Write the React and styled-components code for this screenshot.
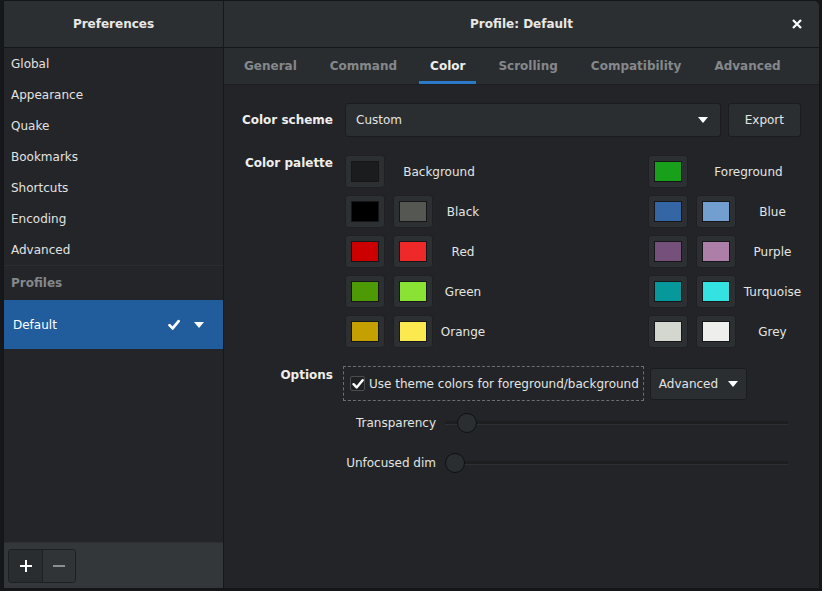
import React from "react";
import styled, { createGlobalStyle } from "styled-components";

const GlobalStyle = createGlobalStyle`
  html, body {
    margin: 0;
    padding: 0;
    background: #16171a;
  }
  * {
    box-sizing: border-box;
  }
`;

const menuItems = ["Global", "Appearance", "Quake", "Bookmarks", "Shortcuts", "Encoding", "Advanced"];
const tabs = ["General", "Command", "Color", "Scrolling", "Compatibility", "Advanced"];

const palette = [
  { left: ["#000000", "#555753"], leftName: "Black", right: ["#3465a4", "#729fcf"], rightName: "Blue" },
  { left: ["#cc0000", "#ef2929"], leftName: "Red", right: ["#75507b", "#ad7fa8"], rightName: "Purple" },
  { left: ["#4e9a06", "#8ae234"], leftName: "Green", right: ["#06989a", "#34e2e2"], rightName: "Turquoise" },
  { left: ["#c4a000", "#fce94f"], leftName: "Orange", right: ["#d3d7cf", "#eeeeec"], rightName: "Grey" },
];

const Page = styled.div`
  width: 822px;
  height: 591px;
  padding: 0 2px 2px 3px;
  font-family: "DejaVu Sans", "Noto Sans", sans-serif;
  font-size: 12px;
  color: #e4e4e2;
`;

const Window = styled.div`
  height: 100%;
  display: grid;
  grid-template-columns: 220px 1fr;
  background: #222427;
  border: 1px solid #141517;
  border-radius: 0 6px 0 0;
  overflow: hidden;
`;

const Sidebar = styled.div`
  display: flex;
  flex-direction: column;
  border-right: 1px solid #17181a;
  background: #232528;
`;

const HeaderBar = styled.div`
  height: 47px;
  flex: none;
  display: flex;
  align-items: center;
  justify-content: center;
  position: relative;
  background: #2c2f32;
  border-bottom: 1px solid #151618;
  font-weight: bold;
  color: #e8e8e6;
`;

const CloseButton = styled.button`
  position: absolute;
  right: 15px;
  top: 16px;
  width: 14px;
  height: 14px;
  padding: 0;
  border: none;
  background: none;
  display: flex;
  align-items: center;
  justify-content: center;
`;

const MenuList = styled.div`
  flex: 1;
  display: flex;
  flex-direction: column;
`;

const MenuItem = styled.div`
  height: 31px;
  display: flex;
  align-items: center;
  padding-left: 7px;
  color: #e2e2e0;
`;

const SectionTitle = styled.div`
  height: 35px;
  display: flex;
  align-items: center;
  padding-left: 7px;
  border-top: 1px solid #2a2c2f;
  font-weight: bold;
  color: #85888b;
`;

const ProfileRow = styled.div`
  height: 49px;
  display: flex;
  align-items: center;
  padding: 0 19px 0 9px;
  background: #215d9c;
  color: #ffffff;
`;

const ProfileName = styled.span`
  flex: 1;
`;

const RowIcons = styled.div`
  display: flex;
  align-items: center;
  gap: 14px;
`;

const Footer = styled.div`
  height: 46px;
  flex: none;
  display: flex;
  align-items: center;
  padding-left: 4px;
  background: #33373a;
  border-top: 1px solid #2c2f32;
`;

const ButtonGroup = styled.div`
  display: flex;
  border: 1px solid #1d1f21;
  border-radius: 3px;
  overflow: hidden;
`;

const GroupButton = styled.button`
  width: 33px;
  height: 32px;
  border: none;
  padding: 0;
  display: flex;
  align-items: center;
  justify-content: center;
  background: ${(p) => (p.$dark ? "#2a2d30" : "#313437")};
  & + & {
    border-left: 1px solid #1d1f21;
  }
`;

const Main = styled.div`
  display: flex;
  flex-direction: column;
  min-width: 0;
`;

const TabBar = styled.div`
  height: 37px;
  flex: none;
  display: flex;
  gap: 11px;
  padding-left: 9px;
  background: #2a2d30;
  border-bottom: 1px solid #1b1d1f;
`;

const Tab = styled.div`
  padding: 0 11px;
  display: flex;
  align-items: center;
  font-weight: bold;
  color: ${(p) => (p.$active ? "#eeeeec" : "#85888b")};
  border-bottom: 3px solid ${(p) => (p.$active ? "#2b79c8" : "transparent")};
  border-top: 3px solid transparent;
`;

const Content = styled.div`
  flex: 1;
  display: grid;
  grid-template-columns: 109px 1fr;
  column-gap: 12px;
  row-gap: 18px;
  align-content: start;
  padding: 18px 18px 0 0;
`;

const FieldLabel = styled.div`
  font-weight: bold;
  text-align: right;
  color: #eeeeec;
  align-self: ${(p) => (p.$top ? "start" : "center")};
  padding-top: ${(p) => p.$pt || 0}px;
`;

const SchemeRow = styled.div`
  display: flex;
  gap: 7px;
`;

const Combo = styled.div`
  flex: 1;
  height: 34px;
  display: flex;
  align-items: center;
  justify-content: space-between;
  padding: 0 12px 0 10px;
  background: #2b2e31;
  border: 1px solid #1a1c1e;
  border-radius: 3px;
`;

const Button = styled.button`
  height: ${(p) => p.$h || 34}px;
  padding: 0 ${(p) => p.$px || 16}px;
  display: flex;
  align-items: center;
  gap: 10px;
  font-family: inherit;
  font-size: 12px;
  color: #e4e4e2;
  background: #2b2e31;
  border: 1px solid #1a1c1e;
  border-radius: 3px;
`;

const PaletteGrid = styled.div`
  display: grid;
  grid-template-columns: 40px 40px 44px 1fr 40px 40px 57px;
  column-gap: 8px;
  row-gap: 7px;
`;

const SwatchButton = styled.div`
  grid-column: ${(p) => p.$col};
  width: 40px;
  height: 33px;
  padding: 5px;
  background: #2d3033;
  border: 1px solid #1e2022;
  border-radius: 3px;
  display: flex;
`;

const SwatchFill = styled.div`
  flex: 1;
  background: ${(p) => p.$color};
  border: 1px solid #151617;
`;

const SwatchLabel = styled.div`
  grid-column: ${(p) => p.$col};
  display: flex;
  align-items: center;
  justify-content: center;
  white-space: nowrap;
  color: #e4e4e2;
`;

const OptionsBlock = styled.div`
  display: flex;
  flex-direction: column;
  margin-left: -2px;
`;

const OptionRow = styled.div`
  display: flex;
  align-items: center;
  gap: 6px;
`;

const CheckFrame = styled.label`
  height: 35px;
  display: flex;
  align-items: center;
  gap: 4px;
  padding: 0 4px 0 6px;
  border: 1px dashed #6b6e71;
  color: #e4e4e2;
`;

const CheckBox = styled.span`
  width: 15px;
  height: 15px;
  border: 1px solid #4a4d50;
  border-radius: 2px;
  background: #1f2123;
  display: flex;
  align-items: center;
  justify-content: center;
`;

const SliderRow = styled.div`
  display: grid;
  grid-template-columns: 93px 1fr;
  column-gap: 9px;
  align-items: center;
  height: 40px;
  margin-top: ${(p) => p.$mt || 0}px;
`;

const SliderLabel = styled.div`
  text-align: right;
  color: #e4e4e2;
`;

const SliderTrack = styled.div`
  position: relative;
  height: 4px;
  margin-right: 13px;
  background: #1c1e20;
  border-bottom: 1px solid #2e3134;
`;

const SliderKnob = styled.div`
  position: absolute;
  top: -8px;
  width: 20px;
  height: 20px;
  border-radius: 50%;
  background: #2b2e31;
  border: 1px solid #0f1011;
`;

const Caret = ({ color = "#ffffff" }) => (
  <svg width="10" height="6" viewBox="0 0 10 6">
    <path d="M0 0 L10 0 L5 6 Z" fill={color} />
  </svg>
);

const CheckIcon = ({ size = 14, weight = 3 }) => (
  <svg width={size} height={size} viewBox="0 0 14 14">
    <path d="M1.8 7.2 L5.4 11 L12.4 2.6" fill="none" stroke="#ffffff" strokeWidth={weight} strokeLinejoin="round" strokeLinecap="round" />
  </svg>
);

const Swatch = ({ col, color }) => (
  <SwatchButton $col={col}>
    <SwatchFill $color={color} />
  </SwatchButton>
);

const App = () => {
  return (
    <>
      <GlobalStyle />
      <Page>
        <Window>
          <Sidebar>
            <HeaderBar>Preferences</HeaderBar>
            <MenuList>
              {menuItems.map((m) => (
                <MenuItem key={m}>{m}</MenuItem>
              ))}
              <SectionTitle>Profiles</SectionTitle>
              <ProfileRow>
                <ProfileName>Default</ProfileName>
                <RowIcons>
                  <CheckIcon size={12} weight={3.2} />
                  <Caret />
                </RowIcons>
              </ProfileRow>
            </MenuList>
            <Footer>
              <ButtonGroup>
                <GroupButton $dark>
                  <svg width="12" height="12" viewBox="0 0 12 12">
                    <path d="M6 0 V12 M0 6 H12" stroke="#ffffff" strokeWidth="2" />
                  </svg>
                </GroupButton>
                <GroupButton>
                  <svg width="12" height="12" viewBox="0 0 12 12">
                    <path d="M0 6 H12" stroke="#8c8f92" strokeWidth="2" />
                  </svg>
                </GroupButton>
              </ButtonGroup>
            </Footer>
          </Sidebar>

          <Main>
            <HeaderBar>
              Profile: Default
              <CloseButton>
                <svg width="10" height="10" viewBox="0 0 10 10">
                  <path d="M1 1 L9 9 M9 1 L1 9" stroke="#ffffff" strokeWidth="2.2" />
                </svg>
              </CloseButton>
            </HeaderBar>
            <TabBar>
              {tabs.map((t) => (
                <Tab key={t} $active={t === "Color"}>
                  {t}
                </Tab>
              ))}
            </TabBar>
            <Content>
              <FieldLabel>Color scheme</FieldLabel>
              <SchemeRow>
                <Combo>
                  <span>Custom</span>
                  <Caret />
                </Combo>
                <Button>Export</Button>
              </SchemeRow>

              <FieldLabel $top $pt={1}>Color palette</FieldLabel>
              <PaletteGrid>
                <Swatch col="1" color="#1a1c1d" />
                <SwatchLabel $col="2 / 4">Background</SwatchLabel>
                <Swatch col="5" color="#18a01a" />
                <SwatchLabel $col="6 / 8">Foreground</SwatchLabel>
                {palette.map((row) => (
                  <React.Fragment key={row.leftName}>
                    <Swatch col="1" color={row.left[0]} />
                    <Swatch col="2" color={row.left[1]} />
                    <SwatchLabel $col="3">{row.leftName}</SwatchLabel>
                    <Swatch col="5" color={row.right[0]} />
                    <Swatch col="6" color={row.right[1]} />
                    <SwatchLabel $col="7">{row.rightName}</SwatchLabel>
                  </React.Fragment>
                ))}
              </PaletteGrid>

              <FieldLabel $top $pt={2}>Options</FieldLabel>
              <OptionsBlock>
                <OptionRow>
                  <CheckFrame>
                    <CheckBox>
                      <CheckIcon size={12} weight={2.8} />
                    </CheckBox>
                    Use theme colors for foreground/background
                  </CheckFrame>
                  <Button $h={32} $px={8}>
                    Advanced
                    <Caret />
                  </Button>
                </OptionRow>
                <SliderRow $mt={2}>
                  <SliderLabel>Transparency</SliderLabel>
                  <SliderTrack>
                    <SliderKnob style={{ left: "12px" }} />
                  </SliderTrack>
                </SliderRow>
                <SliderRow>
                  <SliderLabel>Unfocused dim</SliderLabel>
                  <SliderTrack>
                    <SliderKnob style={{ left: "0px" }} />
                  </SliderTrack>
                </SliderRow>
              </OptionsBlock>
            </Content>
          </Main>
        </Window>
      </Page>
    </>
  );
};

export default App;
